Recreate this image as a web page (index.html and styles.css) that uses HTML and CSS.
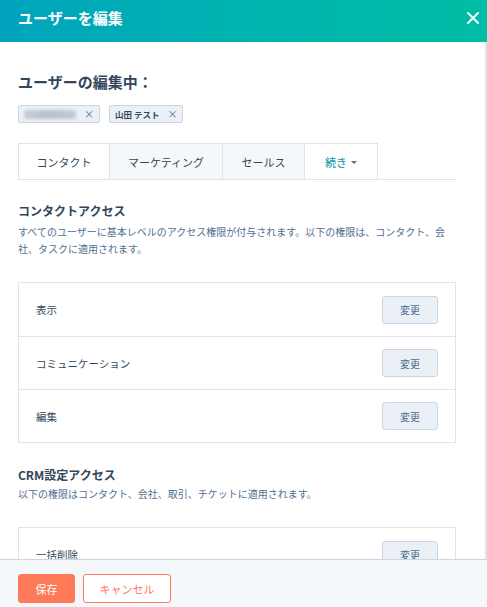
FILE: index.html
```html
<!DOCTYPE html>
<html lang="ja">
<head>
<meta charset="utf-8">
<title>ユーザーを編集</title>
<link rel="stylesheet" href="styles.css">
</head>
<body>
<div class="panel">
  <header class="header">
    <h1 class="header-title">ユーザーを編集</h1>
    <button class="close" aria-label="閉じる">
      <svg width="12" height="12" viewBox="0 0 12 12"><path d="M1 1 L11 11 M11 1 L1 11" stroke="#fff" stroke-width="2" stroke-linecap="round" fill="none"/></svg>
    </button>
  </header>
  <main class="main">
    <h2 class="editing">ユーザーの編集中：</h2>
    <div class="tags">
      <span class="tag"><span class="blur"></span><span class="tag-x">×</span></span>
      <span class="tag"><span class="tag-name">山田 テスト</span><span class="tag-x">×</span></span>
    </div>
    <nav class="tabs">
      <span class="tab tab-active">コンタクト</span>
      <span class="tab tab-inactive tab-mkt">マーケティング</span>
      <span class="tab tab-inactive tab-sales">セールス</span>
      <span class="tab tab-more">続き <span class="caret"></span></span>
    </nav>
    <section class="section">
      <h3 class="section-title">コンタクトアクセス</h3>
      <p class="section-desc">すべてのユーザーに基本レベルのアクセス権限が付与されます。以下の権限は、コンタクト、会社、タスクに適用されます。</p>
      <div class="box">
        <div class="row"><span class="row-label">表示</span><button class="change">変更</button></div>
        <div class="row"><span class="row-label">コミュニケーション</span><button class="change">変更</button></div>
        <div class="row"><span class="row-label">編集</span><button class="change">変更</button></div>
      </div>
    </section>
    <section class="section section-2">
      <h3 class="section-title">CRM設定アクセス</h3>
      <p class="section-desc">以下の権限はコンタクト、会社、取引、チケットに適用されます。</p>
      <div class="box">
        <div class="row"><span class="row-label">一括削除</span><button class="change">変更</button></div>
      </div>
    </section>
  </main>
  <footer class="footer">
    <button class="btn-save">保存</button>
    <button class="btn-cancel">キャンセル</button>
  </footer>
</div>
</body>
</html>
```

FILE: styles.css
```css
* { box-sizing: border-box; }
html, body { margin: 0; padding: 0; }
body {
  width: 487px;
  height: 607px;
  overflow: hidden;
  font-family: "Noto Sans CJK JP", "Noto Sans", sans-serif;
  color: #33475b;
  background: #fff;
}
.panel {
  display: flex;
  flex-direction: column;
  height: 607px;
}
.header {
  height: 42px;
  flex: none;
  display: flex;
  align-items: flex-start;
  justify-content: space-between;
  padding: 0 7px 0 18px;
  background: linear-gradient(90deg, #00a4bd 0%, #00b3b0 50%, #00bda5 100%);
}
.header-title {
  margin: 0;
  padding-top: 7px;
  font-size: 15px;
  line-height: 21px;
  font-weight: 700;
  color: #fff;
}
.close {
  margin-top: 11px;
  width: 14px;
  height: 14px;
  padding: 1px;
  border: 0;
  background: none;
  display: flex;
}
.main {
  flex: 1;
  overflow: hidden;
  padding: 0 29px 0 18px;
  border-right: 2px solid #e1e4e8;
}
.editing {
  margin: 30px 0 0;
  font-size: 15px;
  line-height: 20px;
  font-weight: 700;
}
.tags {
  display: flex;
  gap: 9px;
  margin-top: 13px;
}
.tag {
  height: 18px;
  display: flex;
  align-items: center;
  gap: 8px;
  padding: 0 5px;
  background: #eaf0f6;
  border: 1px solid #cbd6e2;
  border-radius: 2px;
}
.blur {
  width: 52px;
  height: 9px;
  background: linear-gradient(90deg, #c9cfd6 0%, #b9c0c9 40%, #c4cad2 100%);
  filter: blur(1.5px);
  border-radius: 3px;
}
.tag-name {
  font-size: 8.5px;
  font-weight: 700;
  line-height: 12px;
  white-space: nowrap;
}
.tag-x {
  font-size: 10px;
  line-height: 12px;
  color: #516f90;
}
.tabs {
  display: flex;
  margin-top: 20px;
  height: 37px;
  border-bottom: 1px solid #dfe3eb;
}
.tab {
  display: flex;
  align-items: center;
  justify-content: center;
  padding: 0;
  white-space: nowrap;
  font-size: 11px;
  color: #33475b;
  border-top: 1px solid #dfe3eb;
  border-right: 1px solid #dfe3eb;
}
.tab-active {
  border-left: 1px solid #dfe3eb;
  background: #fff;
  width: 92px;
}
.tab-inactive { background: #f5f8fa; }
.tab-mkt { width: 113px; }
.tab-sales { width: 82px; }
.tab-more {
  background: #fff;
  color: #0091ae;
  width: 73px;
  gap: 4px;
}
.caret {
  width: 0;
  height: 0;
  border-left: 3px solid transparent;
  border-right: 3px solid transparent;
  border-top: 3px solid #516f90;
  margin-top: 1px;
}
.section { margin-top: 23px; }
.section-2 { margin-top: 24px; }
.section-title {
  margin: 0;
  font-size: 12px;
  line-height: 16px;
  font-weight: 700;
}
.section-desc {
  margin: 4px 0 0;
  font-size: 10px;
  line-height: 17px;
  color: #516f90;
}
.section-2 .section-desc { margin-top: 2px; }
.box {
  margin-top: 25px;
  border: 1px solid #dfe3eb;
}
.row {
  height: 53px;
  display: flex;
  align-items: center;
  justify-content: space-between;
  padding: 0 17px;
}
.row + .row { border-top: 1px solid #dfe3eb; }
.row-label {
  font-size: 10.5px;
  color: #33475b;
}
.change {
  width: 56px;
  height: 28px;
  background: #eaf0f6;
  border: 1px solid #cbd6e2;
  border-radius: 3px;
  font-family: inherit;
  font-size: 10px;
  color: #506e91;
  padding: 0;
}
.footer {
  flex: none;
  height: 48px;
  background: #f5f8fa;
  border-top: 1px solid #cbd6e2;
  display: flex;
  align-items: flex-start;
  gap: 8px;
  padding: 14px 18px 0;
}
.btn-save, .btn-cancel {
  height: 29px;
  border-radius: 3px;
  font-family: inherit;
  font-size: 11px;
  padding: 0;
}
.btn-save {
  width: 57px;
  background: #ff7a59;
  border: 1px solid #ff7a59;
  color: #fff;
}
.btn-cancel {
  width: 88px;
  background: #fff;
  border: 1px solid #ff7a59;
  color: #ff7a59;
}
```
